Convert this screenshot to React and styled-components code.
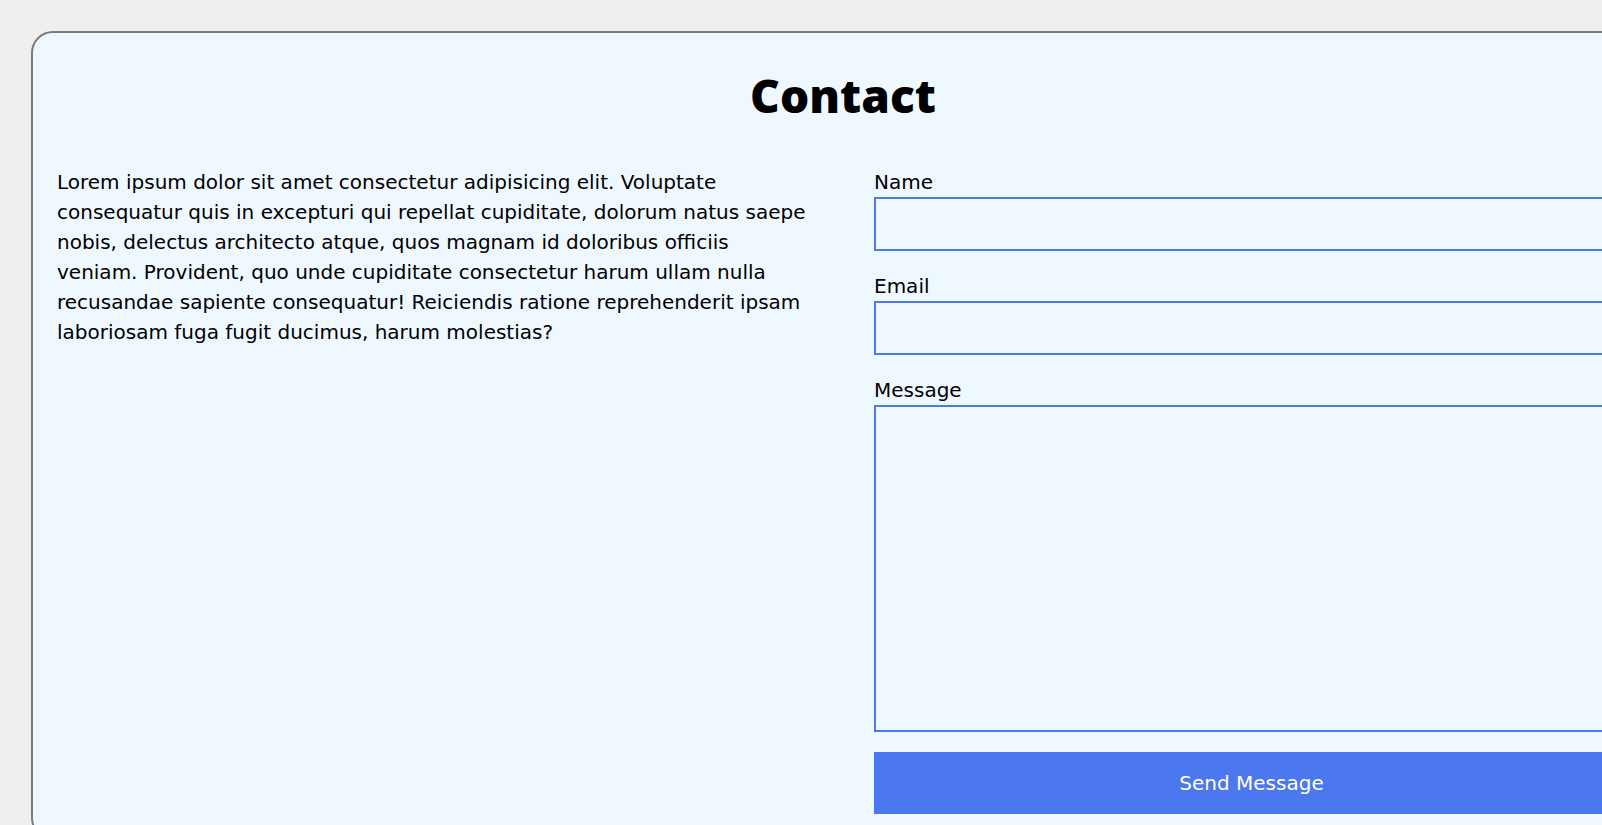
import React from 'react';
import styled, { createGlobalStyle } from 'styled-components';

const GlobalStyle = createGlobalStyle`
  html, body {
    margin: 0;
    padding: 0;
    background: #efeff0;
    font-family: 'DejaVu Sans', 'Open Sans', sans-serif;
    overflow: hidden;
  }
`;

export const Card = styled.section`
  margin: 31px 0 0 31px;
  width: 1572px;
  padding: 24px;
  border: 2px solid #7a7a7a;
  border-radius: 22px;
  background: #f0f8ff;
  color: #000;
`;

export const Title = styled.h1`
  margin: 4px 0 37px;
  text-align: center;
  font-family: 'Open Sans', sans-serif;
  font-size: 46px;
  line-height: 69px;
  font-weight: 800;
`;

export const Columns = styled.div`
  display: grid;
  grid-template-columns: 754px 1fr;
  column-gap: 63px;
`;

export const Text = styled.p`
  margin: 0;
  font-size: 20px;
  line-height: 30px;
`;

export const Form = styled.form`
  display: flex;
  flex-direction: column;
  gap: 20px;
`;

export const Field = styled.label`
  display: flex;
  flex-direction: column;
  font-size: 20px;
  line-height: 30px;
`;

export const Input = styled.input`
  box-sizing: border-box;
  height: 54px;
  border: 2px solid #4d78ef;
  background: transparent;
  font: inherit;
  outline: none;
`;

export const Area = styled.textarea`
  box-sizing: border-box;
  height: 327px;
  border: 2px solid #4d78ef;
  background: transparent;
  font: inherit;
  resize: none;
  outline: none;
`;

export const Button = styled.button`
  height: 62px;
  border: none;
  background: #4c78ef;
  color: #fff;
  font-family: inherit;
  font-size: 20px;
  cursor: pointer;
`;

export default function App() {
  return (
    <>
      <GlobalStyle />
      <Card>
        <Title>Contact</Title>
        <Columns>
          <Text>
            Lorem ipsum dolor sit amet consectetur adipisicing elit. Voluptate consequatur quis in
            excepturi qui repellat cupiditate, dolorum natus saepe nobis, delectus architecto atque,
            quos magnam id doloribus officiis veniam. Provident, quo unde cupiditate consectetur harum
            ullam nulla recusandae sapiente consequatur! Reiciendis ratione reprehenderit ipsam
            laboriosam fuga fugit ducimus, harum molestias?
          </Text>
          <Form onSubmit={(e) => e.preventDefault()}>
            <Field>
              Name
              <Input type="text" />
            </Field>
            <Field>
              Email
              <Input type="email" />
            </Field>
            <Field>
              Message
              <Area />
            </Field>
            <Button type="submit">Send Message</Button>
          </Form>
        </Columns>
      </Card>
    </>
  );
}
